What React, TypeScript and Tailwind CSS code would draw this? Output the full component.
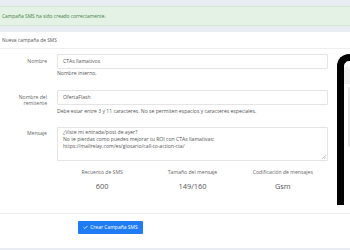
import { Check } from "lucide-react";

function Field({ label, children, help, helpGap }: { label: React.ReactNode; children: React.ReactNode; help?: string; helpGap?: string }) {
  return (
    <div className="flex items-start">
      <div className="w-[47px] pt-[3.5px] text-right text-[5.1px] leading-[6.6px] text-[#666]">{label}</div>
      <div className="ml-[10px] w-[271px]">
        {children}
        {help && <p className={`${helpGap} text-[5.1px] leading-[6px] text-[#555]`}>{help}</p>}
      </div>
    </div>
  );
}

function Stat({ label, value }: { label: string; value: string }) {
  return (
    <div className="flex flex-col items-center">
      <span className="text-[5.1px] leading-[6px] text-[#666]">{label}</span>
      <span className="mt-[7px] text-[7.4px] leading-[9px] text-[#555]">{value}</span>
    </div>
  );
}

export default function App() {
  return (
    <div className="h-[250px] w-[350px] overflow-hidden bg-[#e9ecf2] font-['Open_Sans',sans-serif]">
      <div className="py-[6px]">
        <div className="flex h-[20px] items-center border-y border-[#d4e9d5] bg-[#e4f2e5] px-[2px] text-[4.9px] leading-[6px] text-[#3f7e43]">
          Campaña SMS ha sido creado correctamente.
        </div>
      </div>

      <div className="bg-white">
        <div className="flex h-[17px] items-center border-b border-[#eeeeee] px-[2px] text-[4.9px] leading-[6px] text-[#555]">
          Nueva campaña de SMS
        </div>

        <div className="flex h-[164px]">
          <div className="w-[337px] pt-[5px]">
            <Field label="Nombre" help="Nombre interno." helpGap="mt-[1px]">
              <div className="flex h-[15px] items-center rounded-[1px] border border-[#e4e4e4] px-[5px] text-[5.1px] text-[#555]">
                CTAs llamativos
              </div>
            </Field>

            <div className="mt-[14px]">
              <Field
                label={
                  <>
                    Nombre del
                    <br />
                    remitente
                  </>
                }
                help="Debe estar entre 3 y 11 caracteres. No se permiten espacios y caracteres especiales."
                helpGap="mt-[2.5px]"
              >
                <div className="flex h-[15px] items-center rounded-[1px] border border-[#e4e4e4] px-[5px] text-[5.1px] text-[#555]">
                  OfertaFlash
                </div>
              </Field>
            </div>

            <div className="mt-[13px]">
              <Field label="Mensaje">
                <div className="relative h-[34px] rounded-[1px] border border-[#e4e4e4] px-[5px] pt-[1.5px] text-[5.1px] leading-[6.8px] text-[#555]">
                  <div>¿Viste mi entrada/post de ayer?</div>
                  <div>No te pierdas como puedes mejorar tu ROI con CTAs llamativas:</div>
                  <div>https://mailrelay.com/es/glosario/call-to-action-cta/</div>
                  <svg className="absolute bottom-[1px] right-[1px]" width="4" height="4" viewBox="0 0 4 4">
                    <path d="M4 0L0 4M4 2L2 4" stroke="#aaa" strokeWidth="0.6" />
                  </svg>
                </div>
              </Field>
            </div>

            <div className="ml-[57px] mt-[8px] grid w-[271px] grid-cols-3">
              <Stat label="Recuento de SMS" value="600" />
              <Stat label="Tamaño del mensaje" value="149/160" />
              <Stat label="Codificación de mensajes" value="Gsm" />
            </div>
          </div>

          <div className="flex-1 pt-[5px]">
            <div className="h-[151px] rounded-tl-[12px] border-l-[7px] border-t-[7px] border-black pt-[6px]">
              <div className="h-[17px] bg-[#f1f1f1]" />
              <div className="ml-[4px] mt-[3px] h-[60px] rounded-l-[3px] border border-[#e6e6e6] bg-[#f6f6f6]" />
            </div>
          </div>
        </div>

        <div className="h-[35px] border-t border-[#eeeeee] pl-[78px] pt-[7px]">
          <button className="flex h-[12.5px] w-[65px] items-center justify-center gap-[2px] rounded-[1px] bg-[#1f7cf4] text-[5px] text-white">
            <Check size={5} strokeWidth={4} />
            Crear Campaña SMS
          </button>
        </div>
      </div>
    </div>
  );
}
